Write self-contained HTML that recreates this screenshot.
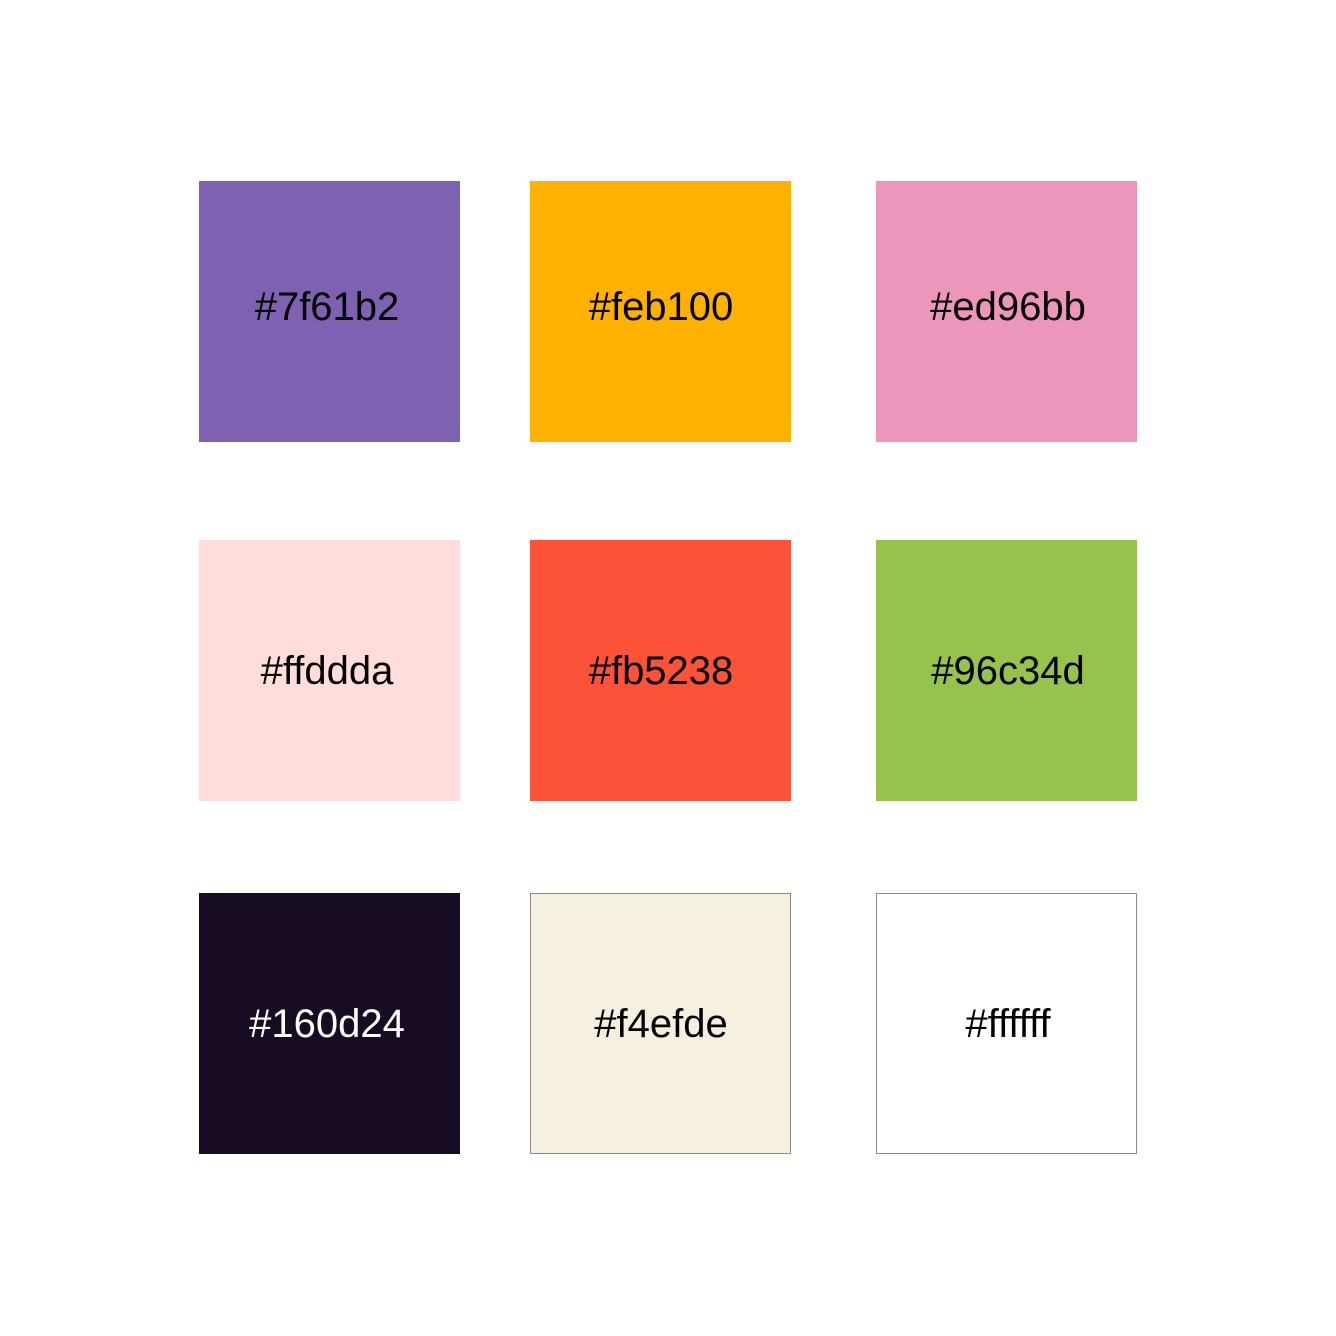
<!DOCTYPE html>
<html><head><meta charset="utf-8"><style>
html,body{margin:0;padding:0;background:#fff;width:1336px;height:1336px;overflow:hidden}
.s{position:absolute;width:261px;height:261px;box-sizing:border-box}
.t{position:absolute;width:300px;text-align:center;font-family:"Liberation Sans",sans-serif;font-size:40px;line-height:40px;color:#000}
</style></head><body>
<div class="s" style="left:199px;top:181px;background:#7f61b2"></div>
<div class="s" style="left:530px;top:181px;background:#feb100"></div>
<div class="s" style="left:876px;top:181px;background:#ed96bb"></div>
<div class="s" style="left:199px;top:540px;background:#ffddda"></div>
<div class="s" style="left:530px;top:540px;background:#fb5238"></div>
<div class="s" style="left:876px;top:540px;background:#96c34d"></div>
<div class="s" style="left:199px;top:893px;background:#160d24"></div>
<div class="s" style="left:530px;top:893px;background:#f4efde;border:1px solid #8a8a80"></div>
<div class="s" style="left:876px;top:893px;background:#fff;border:1px solid #8a8a8a"></div>
<div class="t" style="left:177px;top:287px">#7f61b2</div>
<div class="t" style="left:511px;top:287px">#feb100</div>
<div class="t" style="left:858px;top:287px">#ed96bb</div>
<div class="t" style="left:177px;top:651px">#ffddda</div>
<div class="t" style="left:511px;top:651px">#fb5238</div>
<div class="t" style="left:858px;top:651px">#96c34d</div>
<div class="t" style="left:177px;top:1004px;color:#fff">#160d24</div>
<div class="t" style="left:511px;top:1004px">#f4efde</div>
<div class="t" style="left:858px;top:1004px">#ffffff</div>
</body></html>
